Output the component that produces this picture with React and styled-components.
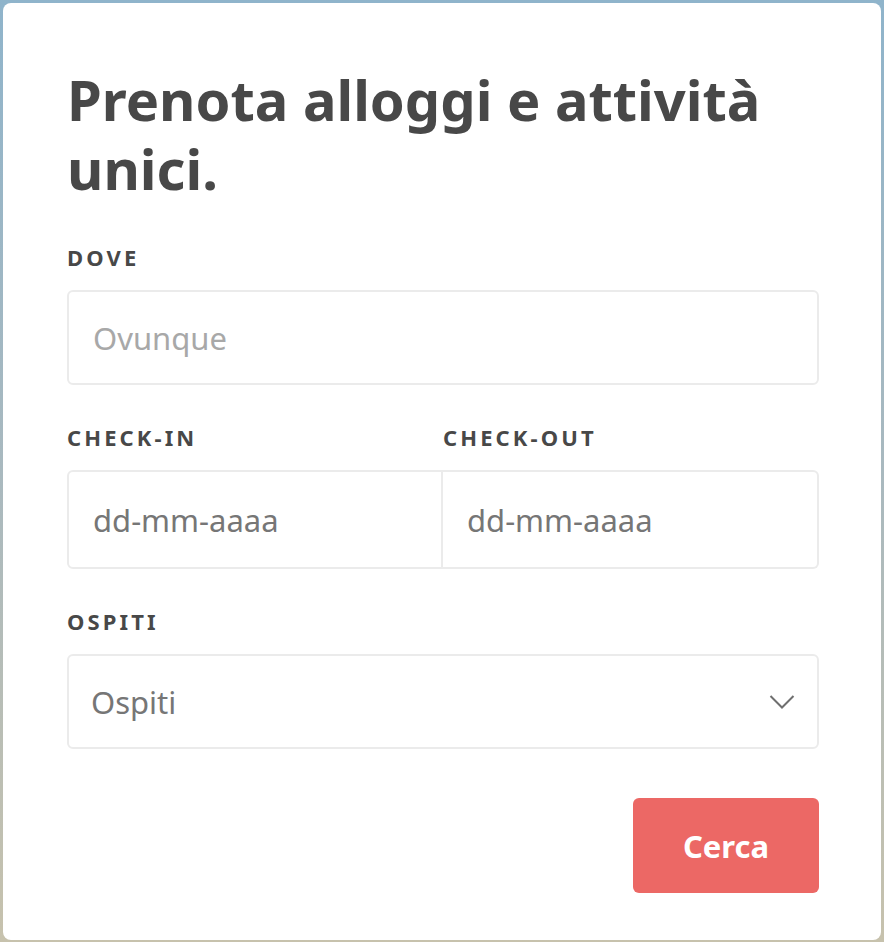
import React from 'react';
import styled, { createGlobalStyle } from 'styled-components';

const GlobalStyle = createGlobalStyle`
  * { box-sizing: border-box; }
  html, body { margin: 0; padding: 0; }
  body {
    min-height: 942px;
    font-family: "Noto Sans", "Open Sans", sans-serif;
    background: linear-gradient(180deg, #8fb4cb 0%, #a9b9bf 50%, #c7c2ad 100%);
  }
`;

const Page = styled.div`
  padding: 3px;
  min-height: 942px;
  display: flex;
`;

const Card = styled.form`
  flex: 1;
  background: #fff;
  border-radius: 8px;
  padding: 62px 62px 47px 64px;
  display: flex;
  flex-direction: column;
`;

const Title = styled.h1`
  margin: 0 0 42px;
  font-size: 56px;
  line-height: 69px;
  font-weight: 700;
  color: #484848;
`;

const Field = styled.div`
  display: flex;
  flex-direction: column;
  margin-bottom: 40px;
  flex: ${(p) => (p.$grow ? 1 : 'none')};
`;

const Label = styled.label`
  font-size: 22px;
  line-height: 24px;
  font-weight: 700;
  letter-spacing: 3.1px;
  color: #484848;
  margin-bottom: 21px;
  text-transform: uppercase;
`;

const Input = styled.input`
  height: ${(p) => p.$height || 95}px;
  border: 2px solid #ebebeb;
  border-radius: ${(p) => p.$radius || '6px'};
  padding: 0 24px;
  font-family: inherit;
  font-size: 31px;
  color: #484848;
  background: #fff;
  outline: none;
  width: 100%;

  &::placeholder {
    color: ${(p) => p.$placeholder || '#a8a8a8'};
  }
`;

const DateRow = styled.div`
  display: flex;
`;

const SelectBox = styled.div`
  position: relative;
  height: 95px;
  border: 2px solid #ebebeb;
  border-radius: 6px;
  display: flex;
  align-items: center;
  padding: 0 22px;
  font-size: 31px;
  color: #767676;
`;

const Chevron = styled.svg`
  position: absolute;
  right: 22px;
  top: 50%;
  transform: translateY(-50%);
`;

const Actions = styled.div`
  display: flex;
  justify-content: flex-end;
  margin-top: 9px;
`;

const Button = styled.button`
  width: 186px;
  height: 95px;
  border: none;
  border-radius: 6px;
  background: #ec6865;
  color: #fff;
  font-family: inherit;
  font-size: 31px;
  font-weight: 700;
  cursor: pointer;
`;

export default function App() {
  return (
    <>
      <GlobalStyle />
      <Page>
        <Card onSubmit={(e) => e.preventDefault()}>
          <Title>
            Prenota alloggi e attività
            <br />
            unici.
          </Title>

          <Field>
            <Label>Dove</Label>
            <Input placeholder="Ovunque" />
          </Field>

          <DateRow>
            <Field $grow>
              <Label>Check-in</Label>
              <Input
                $height={99}
                $radius="6px 0 0 6px"
                $placeholder="#767676"
                placeholder="dd-mm-aaaa"
              />
            </Field>
            <Field $grow>
              <Label>Check-out</Label>
              <Input
                $height={99}
                $radius="0 6px 6px 0"
                $placeholder="#767676"
                placeholder="dd-mm-aaaa"
                style={{ borderLeftWidth: 0 }}
              />
            </Field>
          </DateRow>

          <Field>
            <Label>Ospiti</Label>
            <SelectBox>
              Ospiti
              <Chevron width="26" height="16" viewBox="0 0 26 16" fill="none">
                <path d="M1.5 2 L13 13.5 L24.5 2" stroke="#6f6f6f" strokeWidth="2" />
              </Chevron>
            </SelectBox>
          </Field>

          <Actions>
            <Button type="submit">Cerca</Button>
          </Actions>
        </Card>
      </Page>
    </>
  );
}
